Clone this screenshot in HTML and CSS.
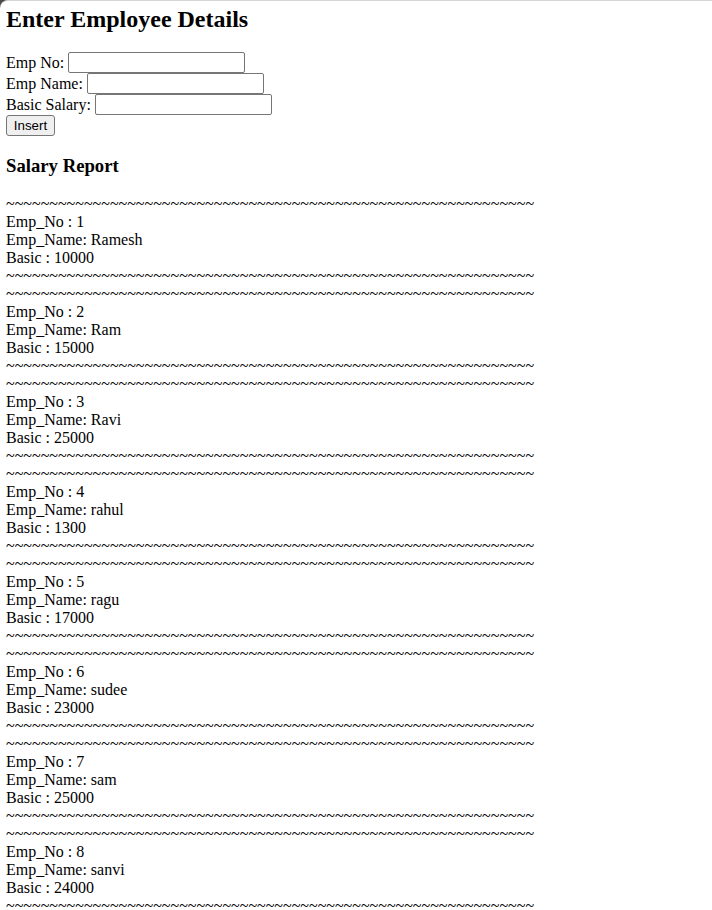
FILE: index.html
```html
<!DOCTYPE html>
<html>
<head>
<meta charset="utf-8">
<title>Employee Details</title>
<link rel="stylesheet" href="styles.css">
</head>
<body>
<h2 class="title">Enter Employee Details</h2>
<form class="form">
  <div class="row"><label>Emp No:</label><input type="text" class="field"></div>
  <div class="row"><label>Emp Name:</label><input type="text" class="field"></div>
  <div class="row"><label>Basic Salary:</label><input type="text" class="field"></div>
  <div class="row"><button type="button" class="btn">Insert</button></div>
</form>
<h3 class="subtitle">Salary Report</h3>
<div class="report">
  <div class="record">
    <div class="sep">~~~~~~~~~~~~~~~~~~~~~~~~~~~~~~~~~~~~~~~~~~~~~~~~~~~~~~~~~~~~~</div>
    <div>Emp_No : 1</div>
    <div>Emp_Name: Ramesh</div>
    <div>Basic : 10000</div>
    <div class="sep">~~~~~~~~~~~~~~~~~~~~~~~~~~~~~~~~~~~~~~~~~~~~~~~~~~~~~~~~~~~~~</div>
  </div>
  <div class="record">
    <div class="sep">~~~~~~~~~~~~~~~~~~~~~~~~~~~~~~~~~~~~~~~~~~~~~~~~~~~~~~~~~~~~~</div>
    <div>Emp_No : 2</div>
    <div>Emp_Name: Ram</div>
    <div>Basic : 15000</div>
    <div class="sep">~~~~~~~~~~~~~~~~~~~~~~~~~~~~~~~~~~~~~~~~~~~~~~~~~~~~~~~~~~~~~</div>
  </div>
  <div class="record">
    <div class="sep">~~~~~~~~~~~~~~~~~~~~~~~~~~~~~~~~~~~~~~~~~~~~~~~~~~~~~~~~~~~~~</div>
    <div>Emp_No : 3</div>
    <div>Emp_Name: Ravi</div>
    <div>Basic : 25000</div>
    <div class="sep">~~~~~~~~~~~~~~~~~~~~~~~~~~~~~~~~~~~~~~~~~~~~~~~~~~~~~~~~~~~~~</div>
  </div>
  <div class="record">
    <div class="sep">~~~~~~~~~~~~~~~~~~~~~~~~~~~~~~~~~~~~~~~~~~~~~~~~~~~~~~~~~~~~~</div>
    <div>Emp_No : 4</div>
    <div>Emp_Name: rahul</div>
    <div>Basic : 1300</div>
    <div class="sep">~~~~~~~~~~~~~~~~~~~~~~~~~~~~~~~~~~~~~~~~~~~~~~~~~~~~~~~~~~~~~</div>
  </div>
  <div class="record">
    <div class="sep">~~~~~~~~~~~~~~~~~~~~~~~~~~~~~~~~~~~~~~~~~~~~~~~~~~~~~~~~~~~~~</div>
    <div>Emp_No : 5</div>
    <div>Emp_Name: ragu</div>
    <div>Basic : 17000</div>
    <div class="sep">~~~~~~~~~~~~~~~~~~~~~~~~~~~~~~~~~~~~~~~~~~~~~~~~~~~~~~~~~~~~~</div>
  </div>
  <div class="record">
    <div class="sep">~~~~~~~~~~~~~~~~~~~~~~~~~~~~~~~~~~~~~~~~~~~~~~~~~~~~~~~~~~~~~</div>
    <div>Emp_No : 6</div>
    <div>Emp_Name: sudee</div>
    <div>Basic : 23000</div>
    <div class="sep">~~~~~~~~~~~~~~~~~~~~~~~~~~~~~~~~~~~~~~~~~~~~~~~~~~~~~~~~~~~~~</div>
  </div>
  <div class="record">
    <div class="sep">~~~~~~~~~~~~~~~~~~~~~~~~~~~~~~~~~~~~~~~~~~~~~~~~~~~~~~~~~~~~~</div>
    <div>Emp_No : 7</div>
    <div>Emp_Name: sam</div>
    <div>Basic : 25000</div>
    <div class="sep">~~~~~~~~~~~~~~~~~~~~~~~~~~~~~~~~~~~~~~~~~~~~~~~~~~~~~~~~~~~~~</div>
  </div>
  <div class="record">
    <div class="sep">~~~~~~~~~~~~~~~~~~~~~~~~~~~~~~~~~~~~~~~~~~~~~~~~~~~~~~~~~~~~~</div>
    <div>Emp_No : 8</div>
    <div>Emp_Name: sanvi</div>
    <div>Basic : 24000</div>
    <div class="sep">~~~~~~~~~~~~~~~~~~~~~~~~~~~~~~~~~~~~~~~~~~~~~~~~~~~~~~~~~~~~~</div>
  </div>
</div>
</body>
</html>
```
FILE: styles.css
```css
html {
  background: #4a4a4a;
}
body {
  margin: 0;
  padding: 0 0 0 6px;
  min-height: 100vh;
  background: #ffffff;
  border-top: 1px solid #d6d6d6;
  border-top-left-radius: 8px;
  font-family: "Liberation Serif", "Times New Roman", serif;
  font-size: 16px;
  color: #000000;
}
.title {
  font-size: 24px;
  font-weight: bold;
  line-height: 28px;
  margin: 4px 0 19px 0;
}
.form {
  margin: 0;
}
.row {
  display: flex;
  align-items: center;
  gap: 4px;
  height: 21px;
}
.field {
  box-sizing: border-box;
  width: 177px;
  height: 21px;
  margin: 0;
  padding: 1px 2px;
  border: 1px solid #767676;
  border-radius: 2px;
  background: #ffffff;
  font-family: "Liberation Sans", Arial, sans-serif;
  font-size: 13.33px;
}
.btn {
  box-sizing: border-box;
  width: 49px;
  height: 21px;
  margin: 0;
  padding: 0 6px;
  border: 1px solid #767676;
  border-radius: 3px;
  background: #efefef;
  color: #000000;
  font-family: "Liberation Sans", Arial, sans-serif;
  font-size: 13.33px;
}
.subtitle {
  font-size: 18.72px;
  font-weight: bold;
  line-height: 22px;
  margin: 18.7px 0;
}
.report {
  line-height: 18px;
}
.sep {
  white-space: nowrap;
}
```
